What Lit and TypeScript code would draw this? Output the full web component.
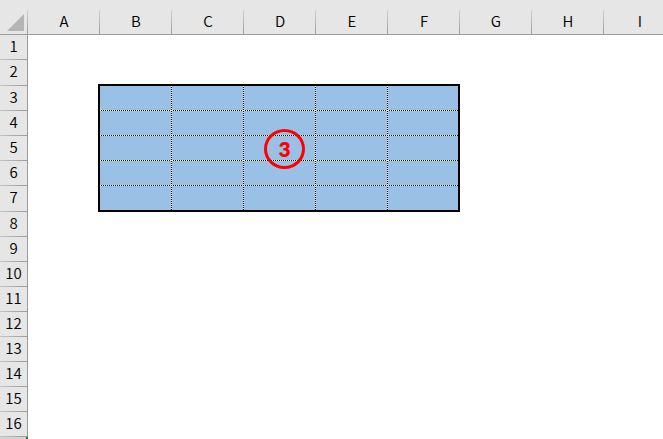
import { LitElement, html, svg, css } from "lit";
import { customElement } from "lit/decorators.js";

const COLUMNS = ["A", "B", "C", "D", "E", "F", "G", "H", "I"];
const ROWS = Array.from({ length: 16 }, (_, i) => i + 1);
const TALL_ROWS = new Set([2, 7]);

@customElement("app-root")
export class AppRoot extends LitElement {
  static styles = css`
    :host {
      display: block;
      position: relative;
      width: 663px;
      height: 439px;
      overflow: hidden;
      background: #fff;
      color: #000;
      font: 350 15px/22px "Noto Sans CJK JP DemiLight", "Noto Sans CJK JP", "Noto Sans", sans-serif;
    }
    .head {
      display: flex;
      box-sizing: border-box;
      height: 35px;
      padding-top: 10px;
      background: #e6e6e6;
      border-bottom: 1px solid #9b9b9b;
    }
    .corner,
    .col {
      box-sizing: border-box;
      flex: none;
      height: 24px;
      border-style: solid;
      border-width: 0 1px 0 0;
      border-image: linear-gradient(#d4d4d4, #999) 1;
      text-align: center;
    }
    .corner {
      width: 28px;
    }
    .corner svg {
      display: block;
      margin: 4px 0 0 7px;
    }
    .col {
      width: 72px;
      padding-left: 1px;
    }
    .body {
      display: flex;
    }
    .rows {
      box-sizing: border-box;
      width: 28px;
      height: 404px;
      flex: none;
      border-right: 1px solid #9b9b9b;
      background: #e6e6e6;
    }
    .row {
      box-sizing: border-box;
      height: 25px;
      border-style: solid;
      border-width: 0 0 1px 0;
      border-image: linear-gradient(90deg, #c6c6c6, #999) 1;
      text-align: center;
      line-height: 21px;
    }
    .tall {
      height: 26px;
    }
    .active {
      box-sizing: border-box;
      width: 28px;
      height: 2px;
      background: #d2d2d2;
      border-right: 2px solid #217346;
    }
    .sheet {
      padding: 49px 0 0 70px;
    }
    .range {
      display: block;
    }
    .badge {
      position: absolute;
      left: 264px;
      top: 129px;
      box-sizing: border-box;
      width: 41px;
      height: 40px;
      border: 3px solid #f00;
      border-radius: 50%;
      color: #f00;
      font: 800 21px/34px Lato, "Open Sans", sans-serif;
      text-align: center;
    }
  `;

  render() {
    return html`
      <div class="head">
        <div class="corner">
          <svg width="17" height="17"><path d="M17 0V17H0Z" fill="#b4b4b4" /></svg>
        </div>
        ${COLUMNS.map((c) => html`<div class="col">${c}</div>`)}
      </div>
      <div class="body">
        <div class="rows">
          ${ROWS.map((r) => html`<div class="row ${TALL_ROWS.has(r) ? "tall" : ""}">${r}</div>`)}
          <div class="active"></div>
        </div>
        <div class="sheet">
          <svg class="range" width="362" height="128" shape-rendering="crispEdges">
            <rect x="1" y="1" width="360" height="126" fill="#9bc0e6" />
            ${[26.5, 51.5, 76.5, 101.5].map((y) => this.rule(2, y, 360, y))}
            ${[73.5, 145.5, 217.5, 289.5].map((x) => this.rule(x, 2, x, 126))}
            <rect x="1" y="1" width="360" height="126" fill="none" stroke="#000" stroke-width="2" />
          </svg>
        </div>
      </div>
      <div class="badge">3</div>
    `;
  }

  private rule(x1: number, y1: number, x2: number, y2: number) {
    return svg`
      <line x1=${x1} y1=${y1} x2=${x2} y2=${y2} stroke="#fff" />
      <line x1=${x1} y1=${y1} x2=${x2} y2=${y2} stroke="#000" stroke-dasharray="1 1" stroke-dashoffset="1" />
    `;
  }
}
